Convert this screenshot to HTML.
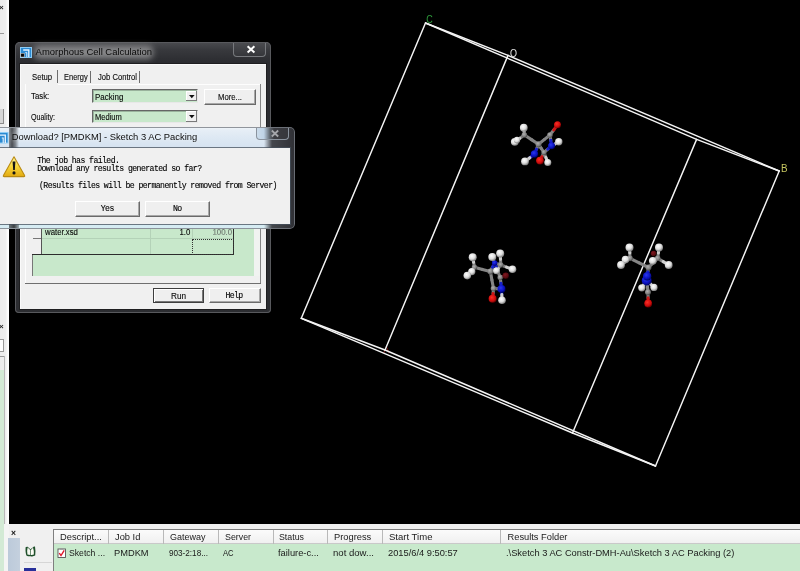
<!DOCTYPE html>
<html><head><meta charset="utf-8"><title>Amorphous Cell Calculation</title>
<style>
html,body{margin:0;padding:0;background:#000;}
body{width:800px;height:571px;overflow:hidden;position:relative;font-family:"Liberation Sans",sans-serif;font-size:8.4px;color:#111;}
.a{position:absolute;}
.t{position:absolute;white-space:nowrap;line-height:10px;}
.mono{font-family:"Liberation Mono","DejaVu Sans Mono",monospace;font-size:8.2px;letter-spacing:-0.59px;color:#000;-webkit-text-stroke:0.12px #000;}
.w{font-size:8.3px;transform-origin:left center;color:#0a0a0a;-webkit-text-stroke:0.12px #111;}
.g{background:#c8e8cb;}
.btn{position:absolute;background:#efefef;border:1px solid #fff;border-right-color:#6a6a6a;border-bottom-color:#6a6a6a;box-sizing:border-box;box-shadow:inset -1px -1px 0 #a8a8a8;text-align:center;}
.hd{position:absolute;top:530px;height:14px;border-right:1px solid #b9b9b9;box-sizing:border-box;}
</style></head><body>
<div id="root" style="position:absolute;left:0;top:0;width:800px;height:571px;overflow:hidden;filter:blur(0.45px);will-change:transform">

<!-- 3D viewport -->
<svg class="a" style="left:0;top:0" width="800" height="571" viewBox="0 0 800 571">
<defs>
<radialGradient id="gw" cx="40%" cy="35%" r="70%"><stop offset="0" stop-color="#ffffff"/><stop offset="0.55" stop-color="#dcdcdc"/><stop offset="1" stop-color="#6e6e6e"/></radialGradient>
<radialGradient id="gr" cx="40%" cy="35%" r="70%"><stop offset="0" stop-color="#f83028"/><stop offset="0.6" stop-color="#d00c0c"/><stop offset="1" stop-color="#5a0000"/></radialGradient>
<radialGradient id="gb" cx="40%" cy="35%" r="70%"><stop offset="0" stop-color="#2a38f0"/><stop offset="0.6" stop-color="#0a12c0"/><stop offset="1" stop-color="#000050"/></radialGradient>
<radialGradient id="gg" cx="40%" cy="35%" r="70%"><stop offset="0" stop-color="#b0b0b0"/><stop offset="0.6" stop-color="#808080"/><stop offset="1" stop-color="#3a3a3a"/></radialGradient>
<radialGradient id="gd" cx="40%" cy="35%" r="70%"><stop offset="0" stop-color="#801820"/><stop offset="0.6" stop-color="#5c0c12"/><stop offset="1" stop-color="#200000"/></radialGradient>
<filter id="bl" x="-5%" y="-5%" width="110%" height="110%"><feGaussianBlur stdDeviation="0.45"/></filter>
</defs>
<g font-family="Liberation Sans, sans-serif" font-size="11">
<text x="383.2" y="352.8" fill="#d21e1e" font-size="9.5" opacity=".75">A</text>
</g>
<g id="cell" stroke="#f4f4f4" stroke-width="1.45" fill="none" stroke-linecap="round">
<line x1="508" y1="55.4" x2="425.5" y2="23"/>
<line x1="508" y1="55.4" x2="779.2" y2="171"/>
<line x1="425.5" y1="23" x2="696.6" y2="139.4"/>
<line x1="779.2" y1="171" x2="696.6" y2="139.4"/>
<line x1="385" y1="350" x2="301.3" y2="318.3"/>
<line x1="385" y1="350" x2="655.5" y2="466"/>
<line x1="301.3" y1="318.3" x2="572.5" y2="433"/>
<line x1="655.5" y1="466" x2="572.5" y2="433"/>
<line x1="508" y1="55.4" x2="385" y2="350"/>
<line x1="425.5" y1="23" x2="301.3" y2="318.3"/>
<line x1="779.2" y1="171" x2="655.5" y2="466"/>
<line x1="696.6" y1="139.4" x2="572.5" y2="433"/>
</g>
<g font-family="Liberation Sans, sans-serif" font-size="11">
<text transform="translate(426.2 22.6) scale(.82 1)" fill="#2f9e3c">C</text>
<text transform="translate(510 56.6) scale(.82 1)" fill="#e6e6e6">O</text>
<text transform="translate(781 172) scale(.9 1)" fill="#c6c660">B</text>
</g>
<g id="mols" filter="url(#bl)" stroke-linecap="round" fill="none"><g><path d="M524.4 135.0L524.1 131.3" stroke="#858585" stroke-width="3.1"/><path d="M524.1 131.3L523.8 127.7" stroke="#cfcfcf" stroke-width="3.1"/><path d="M524.4 135.0L519.6 138.4" stroke="#858585" stroke-width="3.1"/><path d="M519.6 138.4L514.8 141.8" stroke="#cfcfcf" stroke-width="3.1"/><path d="M524.4 135.0L531.5 139.6" stroke="#858585" stroke-width="3.1"/><path d="M531.5 139.6L538.5 144.2" stroke="#858585" stroke-width="3.1"/><path d="M538.5 144.2L544.2 139.6" stroke="#858585" stroke-width="3.1"/><path d="M544.2 139.6L550.0 135.0" stroke="#858585" stroke-width="3.1"/><path d="M550.0 135.0L553.8 129.9" stroke="#858585" stroke-width="3.1"/><path d="M553.8 129.9L557.5 124.8" stroke="#c81818" stroke-width="3.1"/><path d="M550.0 135.0L550.8 140.4" stroke="#858585" stroke-width="3.1"/><path d="M550.8 140.4L551.6 145.8" stroke="#1820c8" stroke-width="3.1"/><path d="M551.6 145.8L555.2 143.8" stroke="#1820c8" stroke-width="3.1"/><path d="M555.2 143.8L558.8 141.8" stroke="#cfcfcf" stroke-width="3.1"/><path d="M538.5 144.2L536.5 149.1" stroke="#858585" stroke-width="3.1"/><path d="M536.5 149.1L534.5 154.0" stroke="#1820c8" stroke-width="3.1"/><path d="M534.5 154.0L529.8 157.7" stroke="#1820c8" stroke-width="3.1"/><path d="M529.8 157.7L525.0 161.4" stroke="#cfcfcf" stroke-width="3.1"/><path d="M538.5 144.2L541.2 148.3" stroke="#858585" stroke-width="3.1"/><path d="M541.2 148.3L544.0 152.5" stroke="#858585" stroke-width="3.1"/><path d="M544.0 152.5L542.0 156.6" stroke="#858585" stroke-width="3.1"/><path d="M542.0 156.6L540.0 160.6" stroke="#c81818" stroke-width="3.1"/><path d="M544.0 152.5L547.8 149.2" stroke="#858585" stroke-width="3.1"/><path d="M547.8 149.2L551.6 145.8" stroke="#1820c8" stroke-width="3.1"/><path d="M544.0 152.5L545.9 157.5" stroke="#858585" stroke-width="3.1"/><path d="M545.9 157.5L547.8 162.5" stroke="#cfcfcf" stroke-width="3.1"/><circle cx="524.4" cy="135.0" r="2.8" fill="url(#gg)"/><circle cx="538.5" cy="144.2" r="3.0" fill="url(#gg)"/><circle cx="550.0" cy="135.0" r="2.8" fill="url(#gg)"/><circle cx="544.0" cy="152.5" r="2.6" fill="url(#gg)"/><circle cx="551.6" cy="145.8" r="3.5" fill="url(#gb)"/><circle cx="534.5" cy="154.0" r="3.7" fill="url(#gb)"/><circle cx="523.8" cy="127.7" r="3.9" fill="url(#gw)"/><circle cx="514.8" cy="141.8" r="3.9" fill="url(#gw)"/><circle cx="517.0" cy="140.0" r="3.2" fill="url(#gw)"/><circle cx="557.5" cy="124.8" r="3.5" fill="url(#gr)"/><circle cx="558.8" cy="141.8" r="3.7" fill="url(#gw)"/><circle cx="547.8" cy="162.5" r="3.5" fill="url(#gw)"/><circle cx="540.0" cy="160.6" r="3.9" fill="url(#gr)"/><circle cx="525.0" cy="161.4" r="3.9" fill="url(#gw)"/></g>
<g><path d="M474.5 267.3L473.6 262.2" stroke="#858585" stroke-width="3.1"/><path d="M473.6 262.2L472.7 257.2" stroke="#cfcfcf" stroke-width="3.1"/><path d="M474.5 267.3L473.1 269.5" stroke="#858585" stroke-width="3.1"/><path d="M473.1 269.5L471.8 271.6" stroke="#cfcfcf" stroke-width="3.1"/><path d="M474.5 267.3L470.9 271.5" stroke="#858585" stroke-width="3.1"/><path d="M470.9 271.5L467.3 275.6" stroke="#cfcfcf" stroke-width="3.1"/><path d="M474.5 267.3L482.4 269.4" stroke="#858585" stroke-width="3.1"/><path d="M482.4 269.4L490.4 271.5" stroke="#858585" stroke-width="3.1"/><path d="M490.4 271.5L491.9 280.0" stroke="#858585" stroke-width="3.1"/><path d="M491.9 280.0L493.5 288.5" stroke="#858585" stroke-width="3.1"/><path d="M490.4 271.5L492.5 267.2" stroke="#858585" stroke-width="3.1"/><path d="M492.5 267.2L494.7 263.0" stroke="#1820c8" stroke-width="3.1"/><path d="M494.7 263.0L493.5 260.0" stroke="#1820c8" stroke-width="3.1"/><path d="M493.5 260.0L492.3 257.0" stroke="#cfcfcf" stroke-width="3.1"/><path d="M494.7 263.0L497.8 264.0" stroke="#1820c8" stroke-width="3.1"/><path d="M497.8 264.0L500.8 265.0" stroke="#858585" stroke-width="3.1"/><path d="M500.8 265.0L500.5 259.2" stroke="#858585" stroke-width="3.1"/><path d="M500.5 259.2L500.2 253.4" stroke="#cfcfcf" stroke-width="3.1"/><path d="M500.8 265.0L506.6 267.1" stroke="#858585" stroke-width="3.1"/><path d="M506.6 267.1L512.5 269.3" stroke="#cfcfcf" stroke-width="3.1"/><path d="M500.8 265.0L498.6 267.9" stroke="#858585" stroke-width="3.1"/><path d="M498.6 267.9L496.5 270.7" stroke="#cfcfcf" stroke-width="3.1"/><path d="M500.2 277.5L503.0 276.6" stroke="#858585" stroke-width="3.1"/><path d="M503.0 276.6L505.8 275.8" stroke="#6a1018" stroke-width="3.1"/><path d="M500.2 277.5L500.9 283.2" stroke="#858585" stroke-width="3.1"/><path d="M500.9 283.2L501.5 289.0" stroke="#1820c8" stroke-width="3.1"/><path d="M500.2 277.5L497.4 270.2" stroke="#858585" stroke-width="3.1"/><path d="M497.4 270.2L494.7 263.0" stroke="#1820c8" stroke-width="3.1"/><path d="M501.5 289.0L497.5 288.8" stroke="#1820c8" stroke-width="3.1"/><path d="M497.5 288.8L493.5 288.5" stroke="#858585" stroke-width="3.1"/><path d="M493.5 288.5L493.1 293.6" stroke="#858585" stroke-width="3.1"/><path d="M493.1 293.6L492.6 298.7" stroke="#c81818" stroke-width="3.1"/><path d="M501.5 289.0L501.8 294.6" stroke="#1820c8" stroke-width="3.1"/><path d="M501.8 294.6L502.0 300.2" stroke="#cfcfcf" stroke-width="3.1"/><circle cx="474.5" cy="267.3" r="2.7" fill="url(#gg)"/><circle cx="490.4" cy="271.5" r="3.0" fill="url(#gg)"/><circle cx="500.8" cy="265.0" r="2.7" fill="url(#gg)"/><circle cx="500.2" cy="277.5" r="2.7" fill="url(#gg)"/><circle cx="493.5" cy="288.5" r="2.8" fill="url(#gg)"/><circle cx="494.7" cy="263.0" r="2.7" fill="url(#gb)"/><circle cx="505.8" cy="275.8" r="3.2" fill="url(#gd)"/><circle cx="472.7" cy="257.2" r="4.0" fill="url(#gw)"/><circle cx="471.8" cy="271.6" r="3.6" fill="url(#gw)"/><circle cx="467.3" cy="275.6" r="3.8" fill="url(#gw)"/><circle cx="492.3" cy="257.0" r="4.0" fill="url(#gw)"/><circle cx="500.2" cy="253.4" r="4.0" fill="url(#gw)"/><circle cx="496.5" cy="270.7" r="3.5" fill="url(#gw)"/><circle cx="512.5" cy="269.3" r="3.8" fill="url(#gw)"/><circle cx="501.5" cy="289.0" r="4.0" fill="url(#gb)"/><circle cx="492.6" cy="298.7" r="4.0" fill="url(#gr)"/><circle cx="502.0" cy="300.2" r="3.8" fill="url(#gw)"/></g>
<g><path d="M630.0 258.3L629.8 252.9" stroke="#858585" stroke-width="3.1"/><path d="M629.8 252.9L629.5 247.4" stroke="#cfcfcf" stroke-width="3.1"/><path d="M630.0 258.3L627.8 259.0" stroke="#858585" stroke-width="3.1"/><path d="M627.8 259.0L625.5 259.6" stroke="#cfcfcf" stroke-width="3.1"/><path d="M630.0 258.3L625.5 261.6" stroke="#858585" stroke-width="3.1"/><path d="M625.5 261.6L621.0 265.0" stroke="#cfcfcf" stroke-width="3.1"/><path d="M630.0 258.3L639.2 262.9" stroke="#858585" stroke-width="3.1"/><path d="M639.2 262.9L648.5 267.5" stroke="#858585" stroke-width="3.1"/><path d="M648.5 267.5L653.1 262.9" stroke="#858585" stroke-width="3.1"/><path d="M653.1 262.9L657.7 258.3" stroke="#858585" stroke-width="3.1"/><path d="M657.7 258.3L658.4 252.9" stroke="#858585" stroke-width="3.1"/><path d="M658.4 252.9L659.0 247.4" stroke="#cfcfcf" stroke-width="3.1"/><path d="M657.7 258.3L663.2 261.6" stroke="#858585" stroke-width="3.1"/><path d="M663.2 261.6L668.7 265.0" stroke="#cfcfcf" stroke-width="3.1"/><path d="M657.7 258.3L655.2 259.6" stroke="#858585" stroke-width="3.1"/><path d="M655.2 259.6L652.8 260.8" stroke="#cfcfcf" stroke-width="3.1"/><path d="M648.5 267.5L647.9 271.9" stroke="#858585" stroke-width="3.1"/><path d="M647.9 271.9L647.2 276.2" stroke="#1820c8" stroke-width="3.1"/><path d="M646.7 280.5L647.4 286.4" stroke="#1820c8" stroke-width="3.1"/><path d="M647.4 286.4L648.0 292.2" stroke="#858585" stroke-width="3.1"/><path d="M648.0 292.2L648.1 297.9" stroke="#858585" stroke-width="3.1"/><path d="M648.1 297.9L648.2 303.5" stroke="#c81818" stroke-width="3.1"/><path d="M646.7 280.5L644.2 284.1" stroke="#1820c8" stroke-width="3.1"/><path d="M644.2 284.1L641.8 287.8" stroke="#cfcfcf" stroke-width="3.1"/><path d="M646.7 280.5L650.4 283.9" stroke="#1820c8" stroke-width="3.1"/><path d="M650.4 283.9L654.0 287.4" stroke="#cfcfcf" stroke-width="3.1"/><circle cx="630.0" cy="258.3" r="2.8" fill="url(#gg)"/><circle cx="648.5" cy="267.5" r="3.0" fill="url(#gg)"/><circle cx="657.7" cy="258.3" r="2.8" fill="url(#gg)"/><circle cx="653.6" cy="253.6" r="2.8" fill="url(#gd)"/><circle cx="629.5" cy="247.4" r="4.0" fill="url(#gw)"/><circle cx="625.5" cy="259.6" r="3.8" fill="url(#gw)"/><circle cx="621.0" cy="265.0" r="3.9" fill="url(#gw)"/><circle cx="659.0" cy="247.4" r="4.0" fill="url(#gw)"/><circle cx="652.8" cy="260.8" r="3.9" fill="url(#gw)"/><circle cx="668.7" cy="265.0" r="3.9" fill="url(#gw)"/><circle cx="646.7" cy="280.5" r="5.0" fill="url(#gb)"/><circle cx="647.2" cy="276.2" r="4.2" fill="url(#gb)"/><circle cx="641.8" cy="287.8" r="3.6" fill="url(#gw)"/><circle cx="654.0" cy="287.4" r="3.6" fill="url(#gw)"/><circle cx="648.0" cy="292.2" r="3.0" fill="url(#gg)"/><circle cx="648.2" cy="303.5" r="3.9" fill="url(#gr)"/></g></g>
</svg>

<!-- left strip -->
<div class="a" style="left:0;top:0;width:9px;height:571px;background:linear-gradient(90deg,#ececec 0,#efefef 6px,#fafafa 7px,#fff 9px)"></div>
<div class="t" style="left:-1px;top:3px;font-size:8px;font-weight:bold;color:#222">×</div>
<div class="a" style="left:0;top:33px;width:4px;height:1px;background:#9a9a9a"></div>
<div class="a" style="left:0;top:109px;width:3px;height:14px;background:#d6d6d6;border-right:1px solid #8c8c8c;border-bottom:1px solid #8c8c8c"></div>
<div class="t" style="left:-1px;top:321.5px;font-size:8px;font-weight:bold;color:#222">×</div>
<div class="a" style="left:0;top:339px;width:3px;height:11px;background:#fff;border:1px solid #9a9a9a;border-left:0"></div>
<div class="a" style="left:0;top:356px;width:5px;height:1px;background:#9a9a9a"></div>
<div class="a" style="left:4.4px;top:356px;width:1px;height:168px;background:#b9b9b9"></div>
<div class="a" style="left:0;top:370px;width:4.2px;height:201px;background:#d3ead5"></div>

<!-- bottom panel -->
<div class="a" style="left:9px;top:524px;width:791px;height:47px;background:#f0f0f0"></div>
<div class="a" style="left:0;top:524px;width:9px;height:47px;background:linear-gradient(90deg,#d3ead5 0,#d3ead5 4px,#f4f4f4 4px)"></div>
<div class="t" style="left:11px;top:527.5px;font-size:8.5px;font-weight:bold;color:#111">×</div>
<div class="a" style="left:8.3px;top:537.6px;width:12px;height:34px;background:linear-gradient(90deg,#bccada,#c4d0de)"></div>
<svg class="a" style="left:23.5px;top:544.5px" width="13" height="13" viewBox="0 0 13 13">
<path d="M1.6 2.2 Q1.2 8 2.6 10.8 Q5 11.6 6.6 11.2 Q9 11.8 11.2 10.6 Q11.8 6 11 1.6 Q9.6 1.4 8.8 2.4 L6.4 4.2 L3.6 1.8 Q2.6 1.4 1.6 2.2 Z" fill="#1f4f2a"/>
<path d="M3.6 2.6 L6.3 5 L6.4 10 Q4.6 10 3.4 9.6 Q2.8 6 3.6 2.6 Z" fill="#f4f8f0"/>
<path d="M9 2.8 L6.9 5 L7 10 Q8.6 10.2 9.8 9.6 Q10.2 6 9 2.8 Z" fill="#fdfdf6"/>
</svg>
<div class="a" style="left:24px;top:561.5px;width:28px;height:1px;background:#d6d6d6"></div>
<div class="a" style="left:24px;top:568px;width:11.8px;height:3px;background:#28309a"></div>
<div class="a" style="left:53px;top:529px;width:747px;height:42px;background:#c8e9cc;border-left:1px solid #7f7f7f;border-top:1px solid #7f7f7f;box-sizing:border-box"></div>
<div class="a" style="left:54px;top:530px;width:746px;height:14px;background:linear-gradient(#fbfbfb,#f0f0f0);border-bottom:1px solid #c9c9c9;box-sizing:border-box"></div>
<div class="hd" style="left:54px;width:55px"></div>
<div class="hd" style="left:109px;width:55px"></div>
<div class="hd" style="left:164px;width:55px"></div>
<div class="hd" style="left:219px;width:55px"></div>
<div class="hd" style="left:274px;width:54px"></div>
<div class="hd" style="left:328px;width:55px"></div>
<div class="hd" style="left:383px;width:118px"></div>
<div id="hdr" style="font-size:9.3px;color:#1a1a1a">
<div class="t" style="left:60px;top:531.8px">Descript...</div>
<div class="t" style="left:115px;top:531.8px">Job Id</div>
<div class="t" style="left:170px;top:531.8px;transform-origin:left;transform:scaleX(.967)">Gateway</div>
<div class="t" style="left:225px;top:531.8px;transform-origin:left;transform:scaleX(.95)">Server</div>
<div class="t" style="left:279px;top:531.8px;transform-origin:left;transform:scaleX(.947)">Status</div>
<div class="t" style="left:334px;top:531.8px">Progress</div>
<div class="t" style="left:389px;top:531.8px;transform-origin:left;transform:scaleX(1.026)">Start Time</div>
<div class="t" style="left:507.5px;top:531.8px">Results Folder</div>
<div class="t" style="left:69px;top:547.5px;transform-origin:left;transform:scaleX(.93)">Sketch ...</div>
<div class="t" style="left:114px;top:547.5px">PMDKM</div>
<div class="t" style="left:168.5px;top:547.5px;transform-origin:left;transform:scaleX(.877)">903-2:18...</div>
<div class="t" style="left:223px;top:547.5px;transform-origin:left;transform:scaleX(.82)">AC</div>
<div class="t" style="left:278px;top:547.5px">failure-c...</div>
<div class="t" style="left:333px;top:547.5px;transform-origin:left;transform:scaleX(1.03)">not dow...</div>
<div class="t" style="left:388px;top:547.5px">2015/6/4 9:50:57</div>
<div class="t" style="left:506px;top:547.5px">.\Sketch 3 AC Constr-DMH-Au\Sketch 3 AC Packing (2)</div>
</div>
<svg class="a" style="left:57px;top:547px" width="10" height="12" viewBox="0 0 10 12">
<rect x="1" y="2" width="7.5" height="8.5" fill="#fff" stroke="#555" stroke-width="0.9"/>
<rect x="3" y="1" width="3.5" height="1.6" fill="#999"/>
<path d="M2.3 6.2 L4 8.6 L7.2 3.4" fill="none" stroke="#e0182a" stroke-width="1.4"/>
</svg>

<!-- Amorphous Cell Calculation window -->
<div id="win1" class="a" style="left:14.7px;top:42.1px;width:256.2px;height:271.2px;border-radius:5px 5px 4px 4px;background:linear-gradient(#6a6b6e 0,#47484c 1.5px,#38393d 8px,#2b2c30 20px,#2c2d31 100%);box-shadow:inset 0 0 0 1px #58595d"></div>
<div class="a" style="left:34px;top:46px;width:119px;height:12.5px;border-radius:5px;background:rgba(215,215,215,.5);filter:blur(3.2px)"></div>
<div class="a" style="left:19.6px;top:63.7px;width:246.5px;height:245.3px;background:#f0f0f0;box-shadow:0 0 0 1px #1e1e20, inset 1px 1px 0 #fafafa"></div>
<!-- title -->
<svg class="a" style="left:20px;top:47px" width="12" height="11" viewBox="0 0 12 11">
<rect x="0.5" y="0.5" width="11" height="10" fill="#2a8ad2" stroke="#8ccbf4" stroke-width="1"/>
<path d="M3.2 3 H8.8 V10" fill="none" stroke="#e3f2ff" stroke-width="1.3"/>
<path d="M5.4 5.6 H6.8 V10" fill="none" stroke="#d6ebfb" stroke-width="1"/>
<rect x="0.8" y="6.4" width="3.4" height="3.6" fill="#060606" stroke="#e8d8c8" stroke-width="0.5"/>
</svg>
<div class="t" id="ttl1" style="left:35.6px;top:46.3px;font-size:9.45px;line-height:12px;color:#0a0a0a">Amorphous Cell Calculation</div>
<div class="a" style="left:232.5px;top:42.6px;width:33.4px;height:14px;border:1px solid #77797d;border-top:0;border-radius:0 0 4px 4px;box-sizing:border-box;background:linear-gradient(#4a4b4f,#35363a)"></div>
<svg class="a" style="left:245.5px;top:44.5px" width="10" height="9" viewBox="0 0 10 9"><path d="M1.6 1.3 L8.4 7.5 M8.4 1.3 L1.6 7.5" stroke="#fff" stroke-width="2"/></svg>
<!-- tabs -->
<div class="t w" style="left:32px;top:72.4px;transform:scaleX(.93)">Setup</div>
<div class="t w" style="left:63.7px;top:72.4px;transform:scaleX(.90)">Energy</div>
<div class="t w" style="left:97.9px;top:72.4px;transform:scaleX(.92)">Job Control</div>
<div class="a" style="left:57.2px;top:69.5px;width:1px;height:13.5px;background:#6e6e6e"></div>
<div class="a" style="left:90.2px;top:71.2px;width:1px;height:11.8px;background:#6e6e6e"></div>
<div class="a" style="left:139.4px;top:71.2px;width:1px;height:11.8px;background:#6e6e6e"></div>
<div class="a" style="left:260.2px;top:84px;width:1px;height:200px;background:#858585"></div>
<div class="a" style="left:25.3px;top:283.2px;width:236px;height:1px;background:#6f6f6f"></div>
<div class="a" style="left:25.3px;top:84px;width:1px;height:199px;background:#fdfdfd"></div>
<div class="a" style="left:58px;top:84px;width:202px;height:1px;background:#fdfdfd"></div>
<div class="t w" style="left:30.9px;top:91.2px;transform:scaleX(.94)">Task:</div>
<div class="t w" style="left:30.9px;top:111.5px;transform:scaleX(.85)">Quality:</div>
<!-- combos -->
<div class="a g" style="left:92.2px;top:89.2px;width:106px;height:13.5px;border:1px solid #666;border-right-color:#e8e8e8;border-bottom-color:#e8e8e8;box-sizing:border-box;box-shadow:inset 1px 1px 0 #9ab39d"></div>
<div class="a" style="left:185.8px;top:90.8px;width:11.2px;height:10.6px;background:#f0f0f0;box-shadow:inset -1px -1px 0 #7a7a7a, inset 1px 1px 0 #fff"></div>
<svg class="a" style="left:188.6px;top:94.6px" width="6" height="4"><path d="M0 0 H5.6 L2.8 3.2 Z" fill="#111"/></svg>
<div class="t w" style="left:94.6px;top:91.6px;transform:scaleX(.96)">Packing</div>
<div class="a g" style="left:92.2px;top:109.8px;width:106px;height:13.5px;border:1px solid #666;border-right-color:#e8e8e8;border-bottom-color:#e8e8e8;box-sizing:border-box;box-shadow:inset 1px 1px 0 #9ab39d"></div>
<div class="a" style="left:185.8px;top:111.4px;width:11.2px;height:10.6px;background:#f0f0f0;box-shadow:inset -1px -1px 0 #7a7a7a, inset 1px 1px 0 #fff"></div>
<svg class="a" style="left:188.6px;top:115.2px" width="6" height="4"><path d="M0 0 H5.6 L2.8 3.2 Z" fill="#111"/></svg>
<div class="t w" style="left:94.6px;top:111.5px;transform:scaleX(.91)">Medium</div>
<div class="btn" style="left:204.4px;top:88.5px;width:52px;height:16px"></div>
<div class="t w" style="left:217.9px;top:91.5px;transform:scaleX(.93)">More...</div>
<!-- grid -->
<div class="a g" style="left:31.5px;top:229px;width:222.5px;height:47.4px;border-left:1px solid #777;box-sizing:border-box"></div>
<div class="a" style="left:254px;top:229px;width:6px;height:47.4px;background:#f1f3f1"></div>
<div class="a" style="left:32px;top:229px;width:10.3px;height:25.5px;background:#f0f0f0;border-right:1px solid #555;box-sizing:border-box"></div>
<div class="a" style="left:32.5px;top:238.3px;width:8.5px;height:1px;background:#777"></div>
<div class="a" style="left:32px;top:254px;width:201.8px;height:1px;background:#2c2c2c"></div>
<div class="a" style="left:233px;top:229px;width:1px;height:26px;background:#2c2c2c"></div>
<div class="a" style="left:42.3px;top:238.3px;width:191px;height:1px;background:#b4d2b8"></div>
<div class="a" style="left:150.3px;top:229px;width:1px;height:25px;background:#b4d2b8"></div>
<div class="a" style="left:192px;top:229px;width:1px;height:10px;background:#b4d2b8"></div>
<div class="a" style="left:192px;top:238.5px;width:41.6px;height:16px;border:1px dotted #333;box-sizing:border-box"></div>
<div class="t w" style="left:45px;top:226.7px;transform:scaleX(.94)">water.xsd</div>
<div class="t w" style="left:160px;top:226.7px;width:30.3px;text-align:right;transform-origin:right;transform:scaleX(.94)">1.0</div>
<div class="t w" style="left:200px;top:226.7px;width:32px;text-align:right;color:#8c9a8e;transform-origin:right;transform:scaleX(.94)">100.0</div>
<!-- Run / Help -->
<div class="btn" style="left:152.8px;top:288.4px;width:51.6px;height:15px;border:1px solid #3e3e3e;box-shadow:inset 1px 1px 0 #fff,inset -1px -1px 0 #777"></div>
<div class="t w" style="left:171px;top:290.9px;transform:scaleX(.99)">Run</div>
<div class="btn" style="left:209px;top:288.4px;width:51.6px;height:15px"></div>
<div class="t mono" style="left:225.4px;top:290.8px">Help</div>

<!-- Download dialog -->
<div id="dlg" class="a" style="left:-6px;top:127px;width:300.9px;height:101.9px;border-radius:5px;background:linear-gradient(90deg,rgba(0,0,0,0) 0,rgba(0,0,0,0) 270px,rgba(52,53,58,.9) 278px,rgba(48,49,54,1) 300px),linear-gradient(#f2f6fa 0,#e6eef6 3px,#dde8f3 11px,#d6e3f0 20px,#d2e1ee 22px,#d6ecf3 100%);box-shadow:inset 0 0 0 1px rgba(120,125,132,.8)"></div>
<div class="a" style="left:9px;top:128px;width:9.5px;height:19.6px;background:linear-gradient(90deg,rgba(20,20,22,.45),rgba(20,20,22,.72) 30%,rgba(20,20,22,.45) 65%,rgba(20,20,22,0))"></div>
<div class="a" style="left:8.8px;top:224px;width:10.4px;height:4px;background:linear-gradient(90deg,rgba(20,20,22,.55),rgba(20,20,22,.8) 50%,rgba(20,20,22,.3))"></div>
<div class="a" style="left:0;top:147.6px;width:290px;height:76px;background:#f0f0f0;box-shadow:0 0 0 1px rgba(70,80,92,.75)"></div>
<svg class="a" style="left:-4.5px;top:131.5px" width="13" height="12" viewBox="0 0 13 12">
<rect x="0.5" y="0.5" width="11.5" height="10.5" fill="#2a8ad2" stroke="#8ccbf4" stroke-width="1"/>
<path d="M3.5 3.2 H9.3 V11" fill="none" stroke="#e9f4ff" stroke-width="1.3"/>
<path d="M5.8 6 H7.2 V11" fill="none" stroke="#e9f4ff" stroke-width="1.1"/>
</svg>
<div class="t" id="ttl2" style="left:11.7px;top:130.7px;font-size:9.4px;line-height:12px;color:#0c0c0c;text-shadow:0 0 4px rgba(255,255,255,.8)">Download? [PMDKM] - Sketch 3 AC Packing</div>
<div class="a" style="left:256.2px;top:127.6px;width:32.8px;height:12.3px;border:1px solid #8a939e;border-top:0;border-radius:0 0 4px 4px;box-sizing:border-box;background:linear-gradient(90deg,#cbdceb 0,#bfd3e6 22%,#5d646c 42%,#3b3c41 55%,#37383d 100%)"></div>
<svg class="a" style="left:270px;top:128.7px" width="10" height="9" viewBox="0 0 10 9"><path d="M1.8 1.5 L8.2 7.5 M8.2 1.5 L1.8 7.5" stroke="#a4a6aa" stroke-width="1.8"/></svg>
<!-- warning icon -->
<svg class="a" style="left:2px;top:155.4px" width="24" height="23" viewBox="0 0 24 23">
<defs><linearGradient id="wy" x1="0" y1="0" x2="0" y2="1"><stop offset="0" stop-color="#fff6a0"/><stop offset="0.5" stop-color="#f7d63a"/><stop offset="1" stop-color="#e2a910"/></linearGradient></defs>
<path d="M12 1.8 L22.6 20.6 Q23 21.6 21.8 21.6 L2.2 21.6 Q1 21.6 1.4 20.6 Z" fill="url(#wy)" stroke="#b98a12" stroke-width="1.1" stroke-linejoin="round"/>
<path d="M10.6 6.6 H13.4 L12.8 15 H11.2 Z" fill="#141414"/>
<circle cx="12" cy="17.9" r="1.55" fill="#141414"/>
</svg>
<div class="t mono" style="left:37.2px;top:155.5px">The job has failed.</div>
<div class="t mono" style="left:37.2px;top:164.1px">Download any results generated so far?</div>
<div class="t mono" style="left:39px;top:181.3px">(Results files will be permanently removed from Server)</div>
<div class="btn" style="left:74.5px;top:201px;width:65.5px;height:15.5px"></div>
<div class="t mono" style="left:74.5px;top:204.4px;width:65.5px;text-align:center">Yes</div>
<div class="btn" style="left:144.5px;top:201px;width:65.5px;height:15.5px"></div>
<div class="t mono" style="left:144.5px;top:204.4px;width:65.5px;text-align:center">No</div>

</div>
</body></html>
